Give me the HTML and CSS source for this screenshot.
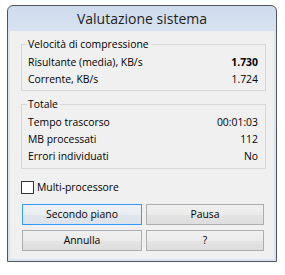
FILE: index.html
```html
<!DOCTYPE html>
<html>
<head>
<meta charset="utf-8">
<link rel="stylesheet" href="styles.css">
</head>
<body>
<div class="window">
  <div class="titlebar">Valutazione sistema</div>
  <div class="client">
    <fieldset class="group g1">
      <legend>Velocità di compressione</legend>
      <div class="row"><span>Risultante (media), KB/s</span><span class="val strong">1.730</span></div>
      <div class="row"><span>Corrente, KB/s</span><span class="val">1.724</span></div>
    </fieldset>
    <fieldset class="group g2">
      <legend>Totale</legend>
      <div class="row"><span>Tempo trascorso</span><span class="val">00:01:03</span></div>
      <div class="row"><span>MB processati</span><span class="val">112</span></div>
      <div class="row"><span>Errori individuati</span><span class="val">No</span></div>
    </fieldset>
    <div class="check"><span class="box"></span><span>Multi-processore</span></div>
    <div class="buttons">
      <div class="btn default">Secondo piano</div>
      <div class="btn">Pausa</div>
      <div class="btn">Annulla</div>
      <div class="btn">?</div>
    </div>
  </div>
</div>
</body>
</html>
```

FILE: styles.css
```css
html, body {
  margin: 0;
  padding: 0;
  background: #ffffff;
}
body {
  font-family: "Open Sans", "Noto Sans", sans-serif;
  font-size: 10.4px;
  color: #000;
}
.window {
  margin: 5px 0 0 7px;
  width: 270px;
  height: 257px;
  box-sizing: border-box;
  border: 1px solid #555;
  border-radius: 6px 6px 0 0;
  background: linear-gradient(#cddbec, #dbe5f2 30px, #d7e3f1);
  display: flex;
  flex-direction: column;
}
.titlebar {
  height: 25px;
  line-height: 26px;
  text-align: center;
  font-size: 14px;
  color: #1e1e1e;
}
.client {
  margin: 0 2px;
  height: 228px;
  background: #f0f0f0;
  display: flex;
  flex-direction: column;
}
.group {
  margin: 5px 0 0 11px;
  padding: 2px 7px 2px 6px;
  width: 245px;
  box-sizing: border-box;
  border: 1px solid #d8d8d8;
  min-width: 0;
}
.group legend {
  padding: 0 2px 0 1px;
  margin-left: -1px;
  line-height: 16px;
  height: 16px;
}
.g2 {
  padding-bottom: 3px;
}
.row {
  display: flex;
  justify-content: space-between;
  height: 17px;
  line-height: 17px;
}
.val.strong {
  font-weight: 700;
}
.check {
  margin: 10px 0 0 11px;
  display: flex;
  align-items: center;
  gap: 3px;
  height: 17px;
  line-height: 17px;
}
.box {
  width: 13px;
  height: 13px;
  box-sizing: border-box;
  border: 1px solid #333;
  background: #fff;
}
.buttons {
  margin: 8px 0 0 12px;
  display: grid;
  grid-template-columns: 120px 118px;
  grid-auto-rows: 21px;
  column-gap: 4px;
  row-gap: 5px;
}
.btn {
  box-sizing: border-box;
  border: 1px solid #adadad;
  background: linear-gradient(#f0f0f0, #ebebeb 50%, #e3e3e3 51%, #dedede);
  text-align: center;
  line-height: 19px;
}
.btn.default {
  border-color: #3399ff;
  background: linear-gradient(#eef2f6, #e9eef3 50%, #e0e6ec 51%, #dce3ea);
}
```
